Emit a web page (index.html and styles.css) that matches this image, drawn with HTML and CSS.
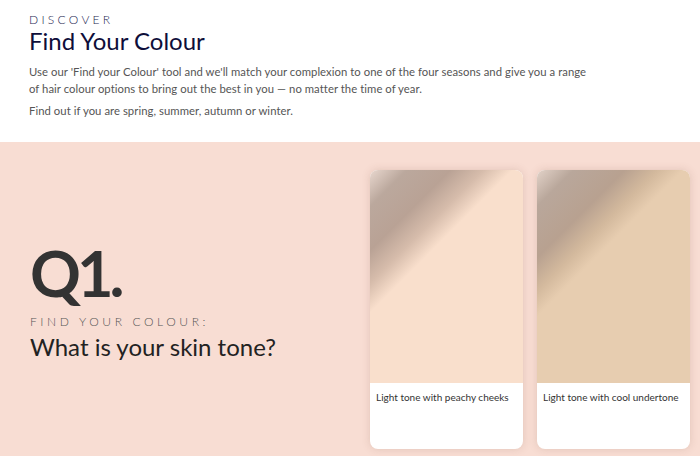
FILE: index.html
```html
<!DOCTYPE html>
<html lang="en">

<head>
    <meta charset="UTF-8">
    <meta name="viewport" content="width=device-width, initial-scale=1.0">
    <title>Find Your Colour</title>
    <link rel="stylesheet" href="styles.css">
</head>

<body>
    <section class="intro">
        <div class="eyebrow">Discover</div>
        <h1>Find Your Colour</h1>
        <p>Use our 'Find your Colour' tool and we'll match your complexion to one of the four seasons and give you a range of hair colour options to bring out the best in you &mdash; no matter the time of year.</p>
        <p>Find out if you are spring, summer, autumn or winter.</p>
    </section>

    <section class="quiz">
        <div class="question">
            <div class="number">Q1.</div>
            <div class="label">Find your colour:</div>
            <h2>What is your skin tone?</h2>
        </div>
        <div class="options">
            <div class="card">
                <div class="swatch peachy"></div>
                <div class="caption">Light tone with peachy cheeks</div>
            </div>
            <div class="card">
                <div class="swatch cool"></div>
                <div class="caption">Light tone with cool undertone</div>
            </div>
        </div>
    </section>
</body>

</html>
```

FILE: styles.css
```css
body {
    font-family: Lato, "Open Sans", sans-serif;
    margin: 0;
    padding: 0;
    background-color: #ffffff;
    color: #333;
}

.intro {
    padding: 12px 29px 18px;
}

.eyebrow {
    font-size: 12px;
    font-weight: 300;
    letter-spacing: 3.3px;
    text-transform: uppercase;
    color: #1c1c4f;
    line-height: 15px;
}

h1 {
    margin: 0 0 8px;
    font-size: 24px;
    font-weight: 400;
    line-height: 28px;
    color: #0e0e3a;
}

.intro p {
    margin: 0 0 5px;
    max-width: 560px;
    font-size: 11.3px;
    letter-spacing: 0.05px;
    line-height: 17px;
    color: #555;
}

.quiz {
    display: flex;
    background-color: #f8ddd3;
    padding: 28px 10px 7px 30px;
}

.question {
    width: 340px;
    padding-top: 70px;
}

.number {
    font-size: 63px;
    font-weight: 700;
    line-height: 66px;
    letter-spacing: -4px;
    color: #333;
}

.label {
    margin-top: 8px;
    font-size: 12px;
    font-weight: 300;
    letter-spacing: 3.6px;
    text-transform: uppercase;
    color: #555;
}

h2 {
    margin: 3px 0 0;
    font-size: 24px;
    font-weight: 400;
    color: #222;
}

.options {
    display: flex;
    gap: 14px;
}

.card {
    width: 153px;
    background-color: #fff;
    border-radius: 8px;
    overflow: hidden;
    box-shadow: 0 0 8px rgba(120, 80, 60, 0.18);
}

.swatch {
    height: 213px;
}

.swatch.peachy {
    background: linear-gradient(135deg, #e8d7ce 0%, #bba89d 10%, #b9a295 22%, #d6bcab 31%, #f9dfcc 39%, #f9dfcc 100%);
}

.swatch.cool {
    background: linear-gradient(135deg, #e2d2c8 0%, #b9a79b 10%, #b8a190 24%, #d3b99d 33%, #e7cdb0 40%, #e7cdb0 100%);
}

.caption {
    height: 66px;
    padding: 8px 6px;
    box-sizing: border-box;
    font-size: 10px;
    color: #333;
}
```
